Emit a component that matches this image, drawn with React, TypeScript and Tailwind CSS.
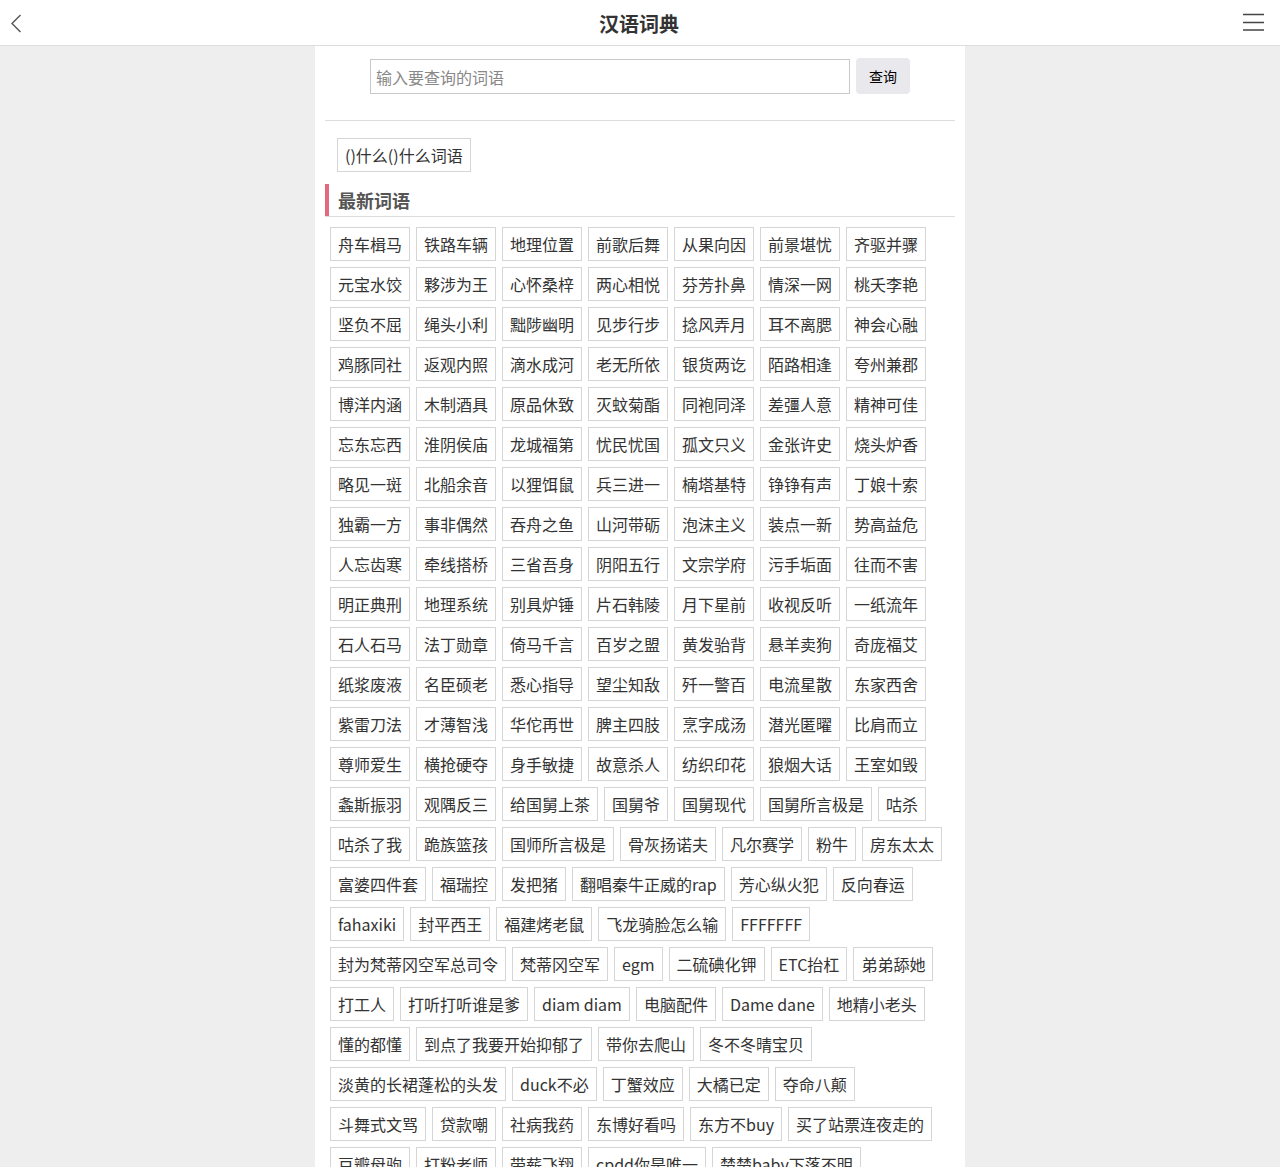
const FONT = "font-['Noto_Sans_CJK_SC','Noto_Sans',sans-serif]"

const words: string[] = [
  '舟车楫马', '铁路车辆', '地理位置', '前歌后舞', '从果向因', '前景堪忧', '齐驱并骤',
  '元宝水饺', '夥涉为王', '心怀桑梓', '两心相悦', '芬芳扑鼻', '情深一网', '桃夭李艳',
  '坚负不屈', '绳头小利', '黜陟幽明', '见步行步', '捻风弄月', '耳不离腮', '神会心融',
  '鸡豚同社', '返观内照', '滴水成河', '老无所依', '银货两讫', '陌路相逢', '夸州兼郡',
  '博洋内涵', '木制酒具', '原品休致', '灭蚊菊酯', '同袍同泽', '差彊人意', '精神可佳',
  '忘东忘西', '淮阴侯庙', '龙城福第', '忧民忧国', '孤文只义', '金张许史', '烧头炉香',
  '略见一斑', '北船余音', '以狸饵鼠', '兵三进一', '楠塔基特', '铮铮有声', '丁娘十索',
  '独霸一方', '事非偶然', '吞舟之鱼', '山河带砺', '泡沫主义', '装点一新', '势高益危',
  '人忘齿寒', '牵线搭桥', '三省吾身', '阴阳五行', '文宗学府', '污手垢面', '往而不害',
  '明正典刑', '地理系统', '别具炉锤', '片石韩陵', '月下星前', '收视反听', '一纸流年',
  '石人石马', '法丁勋章', '倚马千言', '百岁之盟', '黄发骀背', '悬羊卖狗', '奇庞福艾',
  '纸浆废液', '名臣硕老', '悉心指导', '望尘知敌', '歼一警百', '电流星散', '东家西舍',
  '紫雷刀法', '才薄智浅', '华佗再世', '脾主四肢', '烹字成汤', '潜光匿曜', '比肩而立',
  '尊师爱生', '横抢硬夺', '身手敏捷', '故意杀人', '纺织印花', '狼烟大话', '王室如毁',
  '螽斯振羽', '观隅反三', '给国舅上茶', '国舅爷', '国舅现代', '国舅所言极是', '咕杀',
  '咕杀了我', '跪族篮孩', '国师所言极是', '骨灰扬诺夫', '凡尔赛学', '粉牛', '房东太太',
  '富婆四件套', '福瑞控', '发把猪', '翻唱秦牛正威的rap', '芳心纵火犯', '反向春运',
  'fahaxiki', '封平西王', '福建烤老鼠', '飞龙骑脸怎么输', 'FFFFFFF',
  '封为梵蒂冈空军总司令', '梵蒂冈空军', 'egm', '二硫碘化钾', 'ETC抬杠', '弟弟舔她',
  '打工人', '打听打听谁是爹', 'diam diam', '电脑配件', 'Dame dane', '地精小老头',
  '懂的都懂', '到点了我要开始抑郁了', '带你去爬山', '冬不冬晴宝贝',
  '淡黄的长裙蓬松的头发', 'duck不必', '丁蟹效应', '大橘已定', '夺命八颠',
  '斗舞式文骂', '贷款嘲', '社病我药', '东博好看吗', '东方不buy', '买了站票连夜走的',
  '豆瓣母驹', '打粉老师', '带薪飞翔', 'cpdd你是唯一', '楚楚baby下落不明',
]

export default function App() {
  return (
    <div className={`min-h-screen bg-[#eeeeee] text-[#333] ${FONT}`}>
      <header className="h-[46px] pt-[2px] bg-white border-b border-[#dddddd] flex items-center justify-between px-[10px]">
        <button className="w-[24px] h-[30px] flex items-center">
          <svg width="12" height="19" viewBox="0 0 12 19" fill="none" stroke="#555" strokeWidth="1.4">
            <path d="M10.5 1 L2 9.5 L10.5 18" />
          </svg>
        </button>
        <h1 className="text-[20px] font-bold leading-none text-[#333] ml-[4px]">汉语词典</h1>
        <button className="w-[24px] h-[30px] flex items-center justify-end mr-[6px] -mt-[3px]">
          <svg width="21" height="18" viewBox="0 0 21 18" fill="none" stroke="#444" strokeWidth="1.4">
            <path d="M0 1.5 H21 M0 9.5 H21 M0 17 H21" />
          </svg>
        </button>
      </header>

      <main className="w-[650px] mx-auto bg-white px-[10px] pb-[20px]">
        <div className="pt-[12px] flex justify-center gap-[6px]">
          <input
            className="w-[480px] h-[35px] mt-[1px] border border-[#c8c8c8] px-[5px] text-[16px] placeholder-[#888] outline-none"
            placeholder="输入要查询的词语"
          />
          <button className="w-[54px] h-[36px] rounded-[4px] bg-[#e9e9ed] text-[14px] text-black">查询</button>
        </div>

        <div className="mt-[26px] border-t border-[#dddddd]" />

        <div className="mt-[17px] ml-[12px] flex">
          <span className="border border-[#d5d5d5] px-[7px] py-[4px] text-[16px] leading-[24px]">()什么()什么词语</span>
        </div>

        <div className="mt-[12px] border-b border-[#dddddd] flex">
          <h2 className="border-l-[4px] border-[#e4687f] h-[32px] pl-[9px] flex items-center text-[18px] font-bold text-[#555]">最新词语</h2>
        </div>

        <div className="mt-[10px] pl-[5px] flex flex-wrap gap-[6px]">
          {words.map(w => (
            <span key={w} className="border border-[#d5d5d5] px-[7px] py-[4px] text-[16px] leading-[24px] text-[#333] whitespace-nowrap">
              {w}
            </span>
          ))}
        </div>
      </main>
    </div>
  )
}
